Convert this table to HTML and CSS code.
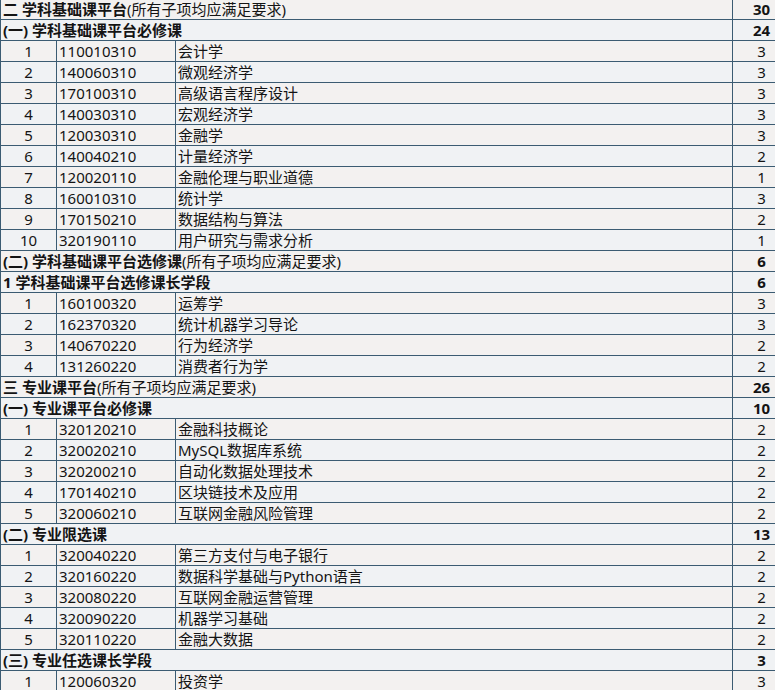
FILE: index.html
```html
<!DOCTYPE html>
<html lang="zh-CN">
<head>
<meta charset="utf-8">
<title>课程表</title>
<link rel="stylesheet" href="styles.css">
</head>
<body>
<table class="plan">
  <colgroup>
    <col class="c-no">
    <col class="c-code">
    <col class="c-name">
    <col class="c-cr">
  </colgroup>
  <tbody>
    <tr class="head"><td colspan="3"><b>二 学科基础课平台</b>(所有子项均应满足要求)</td><td class="cr">30</td></tr>
    <tr class="head"><td colspan="3"><b>(一) 学科基础课平台必修课</b></td><td class="cr">24</td></tr>
    <tr><td class="no">1</td><td>110010310</td><td>会计学</td><td class="cr">3</td></tr>
    <tr><td class="no">2</td><td>140060310</td><td>微观经济学</td><td class="cr">3</td></tr>
    <tr><td class="no">3</td><td>170100310</td><td>高级语言程序设计</td><td class="cr">3</td></tr>
    <tr><td class="no">4</td><td>140030310</td><td>宏观经济学</td><td class="cr">3</td></tr>
    <tr><td class="no">5</td><td>120030310</td><td>金融学</td><td class="cr">3</td></tr>
    <tr><td class="no">6</td><td>140040210</td><td>计量经济学</td><td class="cr">2</td></tr>
    <tr><td class="no">7</td><td>120020110</td><td>金融伦理与职业道德</td><td class="cr">1</td></tr>
    <tr><td class="no">8</td><td>160010310</td><td>统计学</td><td class="cr">3</td></tr>
    <tr><td class="no">9</td><td>170150210</td><td>数据结构与算法</td><td class="cr">2</td></tr>
    <tr><td class="no">10</td><td>320190110</td><td>用户研究与需求分析</td><td class="cr">1</td></tr>
    <tr class="head"><td colspan="3"><b>(二) 学科基础课平台选修课</b>(所有子项均应满足要求)</td><td class="cr">6</td></tr>
    <tr class="head"><td colspan="3"><b>1 学科基础课平台选修课长学段</b></td><td class="cr">6</td></tr>
    <tr><td class="no">1</td><td>160100320</td><td>运筹学</td><td class="cr">3</td></tr>
    <tr><td class="no">2</td><td>162370320</td><td>统计机器学习导论</td><td class="cr">3</td></tr>
    <tr><td class="no">3</td><td>140670220</td><td>行为经济学</td><td class="cr">2</td></tr>
    <tr><td class="no">4</td><td>131260220</td><td>消费者行为学</td><td class="cr">2</td></tr>
    <tr class="head"><td colspan="3"><b>三 专业课平台</b>(所有子项均应满足要求)</td><td class="cr">26</td></tr>
    <tr class="head"><td colspan="3"><b>(一) 专业课平台必修课</b></td><td class="cr">10</td></tr>
    <tr><td class="no">1</td><td>320120210</td><td>金融科技概论</td><td class="cr">2</td></tr>
    <tr><td class="no">2</td><td>320020210</td><td>MySQL数据库系统</td><td class="cr">2</td></tr>
    <tr><td class="no">3</td><td>320200210</td><td>自动化数据处理技术</td><td class="cr">2</td></tr>
    <tr><td class="no">4</td><td>170140210</td><td>区块链技术及应用</td><td class="cr">2</td></tr>
    <tr><td class="no">5</td><td>320060210</td><td>互联网金融风险管理</td><td class="cr">2</td></tr>
    <tr class="head"><td colspan="3"><b>(二) 专业限选课</b></td><td class="cr">13</td></tr>
    <tr><td class="no">1</td><td>320040220</td><td>第三方支付与电子银行</td><td class="cr">2</td></tr>
    <tr><td class="no">2</td><td>320160220</td><td>数据科学基础与Python语言</td><td class="cr">2</td></tr>
    <tr><td class="no">3</td><td>320080220</td><td>互联网金融运营管理</td><td class="cr">2</td></tr>
    <tr><td class="no">4</td><td>320090220</td><td>机器学习基础</td><td class="cr">2</td></tr>
    <tr><td class="no">5</td><td>320110220</td><td>金融大数据</td><td class="cr">2</td></tr>
    <tr class="head"><td colspan="3"><b>(三) 专业任选课长学段</b></td><td class="cr">3</td></tr>
    <tr><td class="no">1</td><td>120060320</td><td>投资学</td><td class="cr">3</td></tr>
  </tbody>
</table>
</body>
</html>
```
FILE: styles.css
```css
html, body {
  margin: 0;
  padding: 0;
  overflow: hidden;
  background: #f2f2f2;
}
.plan {
  border-collapse: collapse;
  table-layout: fixed;
  width: 790px;
  margin-top: -2px;
  font-family: "Noto Sans", "Noto Sans CJK SC", sans-serif;
  font-size: 15px;
  color: #141414;
  background: #f2f2f2;
}
.c-no { width: 56px; }
.c-code { width: 119px; }
.c-name { width: 557px; }
.c-cr { width: 58px; }
.plan td {
  border: 1px solid #3b5b72;
  height: 20px;
  padding: 0 0 0 2px;
  line-height: 20px;
  white-space: nowrap;
  overflow: hidden;
  box-sizing: border-box;
}
.plan tr:nth-child(odd) td { background: #f3f1f0; }
.plan tr:nth-child(even) td { background: #f0f2f4; }
.plan td.no { text-align: center; padding: 0; }
.plan td.cr { text-align: center; padding: 0; }
.plan .head td { font-weight: 400; }
.plan .head td.cr { font-weight: 700; }
.plan b { font-weight: 700; }
```
